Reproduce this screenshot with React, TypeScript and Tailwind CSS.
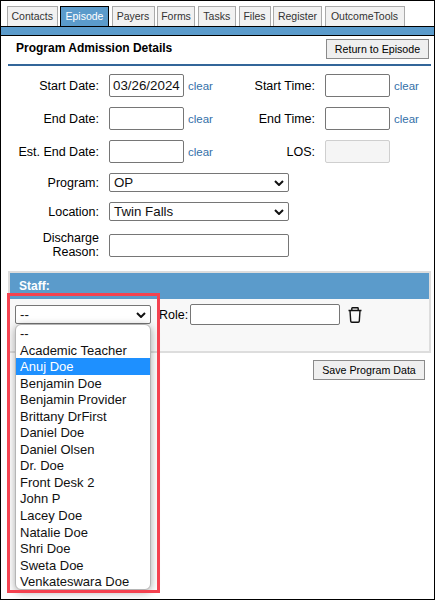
import React from "react";

const tabs = [
  ["Contacts", "w-[50.5px]"],
  ["Episode", "w-[49px]"],
  ["Payers", "w-[43px]"],
  ["Forms", "w-[38px]"],
  ["Tasks", "w-[38.5px]"],
  ["Files", "w-[32px]"],
  ["Register", "w-[49px]"],
  ["OutcomeTools", "w-[80px]"],
];

const staff = [
  "--",
  "Academic Teacher",
  "Anuj Doe",
  "Benjamin Doe",
  "Benjamin Provider",
  "Brittany DrFirst",
  "Daniel Doe",
  "Daniel Olsen",
  "Dr. Doe",
  "Front Desk 2",
  "John P",
  "Lacey Doe",
  "Natalie Doe",
  "Shri Doe",
  "Sweta Doe",
  "Venkateswara Doe",
];

function Label({ children, w = "w-[98px]" }: { children: React.ReactNode; w?: string }) {
  return <div className={`${w} shrink-0 text-right text-[12.5px] leading-[14px] text-black`}>{children}</div>;
}

function Field({ value = "", disabled = false, w = "w-[75px]" }: { value?: string; disabled?: boolean; w?: string }) {
  return (
    <div
      className={`${w} h-[23px] shrink-0 rounded-[2px] border px-[3px] text-[13.33px] leading-[21px] text-[#111] ${
        disabled ? "border-[#cfcfcf] bg-[#f5f5f5]" : "border-[#767676] bg-white"
      }`}
    >
      {value}
    </div>
  );
}

function Clear() {
  return <span className="ml-[4px] pt-px text-[11.5px] leading-[23px] text-[#336fa8]">clear</span>;
}

function Chevron() {
  return (
    <svg width="10" height="6" viewBox="0 0 10 6" className="absolute right-[4px] top-[6px]">
      <path d="M1 1l4 4 4-4" fill="none" stroke="#111" strokeWidth="2" />
    </svg>
  );
}

function Select({ value, className }: { value: string; className: string }) {
  return (
    <div
      className={`relative shrink-0 rounded-[2px] border border-[#767676] bg-white pl-[4px] text-[13.33px] leading-[17px] text-[#111] ${className}`}
    >
      {value}
      <Chevron />
    </div>
  );
}

function Btn({ children, className }: { children: React.ReactNode; className: string }) {
  return (
    <div
      className={`flex h-[20px] items-center justify-center border border-[#8a8a8a] bg-[#efefef] text-[10.67px] text-black ${className}`}
    >
      {children}
    </div>
  );
}

export default function App() {
  return (
    <div
      className="relative h-[600px] w-[435px] overflow-hidden border border-black bg-white"
      style={{ fontFamily: '"Liberation Sans", Arial, sans-serif' }}
    >
      <div className="flex h-[25px] gap-[2.5px] pl-[6px] pt-[5px]">
        {tabs.map(([t, w]) => (
          <div
            key={t}
            className={`${w} flex shrink-0 items-center justify-center text-[10.5px] ${
              t === "Episode"
                ? "border-x border-t border-black bg-[#5b9bcb] text-white"
                : "border-x border-t border-[#aaa] bg-[#f1f1f1] text-[#333]"
            }`}
          >
            {t}
          </div>
        ))}
      </div>
      <div className="h-[10px] border-y border-black bg-[#5b9bcb]" />

      <div className="flex h-[28px] items-start justify-between pl-[15px] pr-[5px] pt-[3px]">
        <div className="pt-[2px] text-[12px] font-bold leading-[14px] text-black">Program Admission Details</div>
        <Btn className="w-[103px]">Return to Episode</Btn>
      </div>
      <div className="ml-[7px] mr-[3px] h-[2px] bg-[#336699]" />

      <div className="flex flex-col pt-[8px]">
        <div className="flex h-[33px] items-start">
          <div className="flex w-[224px] items-start">
            <Label>
              <div className="pt-[5px]">Start Date:</div>
            </Label>
            <div className="ml-[10px]">
              <Field value="03/26/2024" />
            </div>
            <Clear />
          </div>
          <Label w="w-[90px]">
            <div className="pt-[5px]">Start Time:</div>
          </Label>
          <div className="ml-[10px] flex">
            <Field w="w-[65px]" />
            <Clear />
          </div>
        </div>
        <div className="flex h-[33px] items-start">
          <div className="flex w-[224px] items-start">
            <Label>
              <div className="pt-[5px]">End Date:</div>
            </Label>
            <div className="ml-[10px]">
              <Field />
            </div>
            <Clear />
          </div>
          <Label w="w-[90px]">
            <div className="pt-[5px]">End Time:</div>
          </Label>
          <div className="ml-[10px] flex">
            <Field w="w-[65px]" />
            <Clear />
          </div>
        </div>
        <div className="flex h-[33px] items-start">
          <div className="flex w-[224px] items-start">
            <Label>
              <div className="pt-[5px]">Est. End Date:</div>
            </Label>
            <div className="ml-[10px]">
              <Field />
            </div>
            <Clear />
          </div>
          <Label w="w-[90px]">
            <div className="pt-[5px]">LOS:</div>
          </Label>
          <div className="ml-[10px] flex">
            <Field w="w-[65px]" disabled />
          </div>
        </div>
        <div className="flex h-[29px] items-start">
          <Label>
            <div className="pt-[3px]">Program:</div>
          </Label>
          <Select value="OP" className="ml-[10px] h-[19px] w-[180px]" />
        </div>
        <div className="flex h-[32px] items-start">
          <Label>
            <div className="pt-[3px]">Location:</div>
          </Label>
          <Select value="Twin Falls" className="ml-[10px] h-[19px] w-[180px]" />
        </div>
        <div className="flex h-[37px] items-start">
          <Label>
            <div className="-mt-[3px]">
              Discharge
              <br />
              Reason:
            </div>
          </Label>
          <div className="ml-[10px]">
            <Field w="w-[180px]" />
          </div>
        </div>
      </div>

      <div className="ml-[7px] mr-[3px] h-[82px] border-2 border-[#dddddd] bg-[#f8f8f8]">
        <div className="h-[26px] bg-[#5b9bcb] pl-[9px] pt-[6px] text-[12px] font-bold leading-[14px] text-white">
          Staff:
        </div>
        <div className="flex items-start pl-[5px] pt-[6px]">
          <Select value="--" className="h-[19px] w-[136px]" />
          <span className="ml-[8px] pt-px text-[12.5px] leading-[19px] text-black">Role:</span>
          <div className="ml-[2px] -mt-px h-[21px] w-[150px] rounded-[2px] border border-[#767676] bg-white" />
          <svg width="14" height="16" viewBox="0 0 14 16" className="ml-[8px] mt-[2px]">
            <path
              d="M.5 3.5h13M3.8 3V1.4q0-.6.6-.6h5.2q.6 0 .6.6V3M2 3.5l.7 10.6q.1 1.1 1.1 1.1h6.4q1 0 1.1-1.1L12 3.5"
              fill="none"
              stroke="#111"
              strokeWidth="1.4"
            />
          </svg>
        </div>
      </div>

      <div className="flex justify-end pr-[9px] pt-[7px]">
        <Btn className="w-[112px]">Save Program Data</Btn>
      </div>

      <div className="absolute left-[14px] top-[323px] h-[266px] w-[136px] overflow-hidden rounded-[6px] border border-[#b5b5b5] bg-white text-[13px] leading-[17px] text-[#111] shadow-[0_2px_8px_rgba(0,0,0,0.35)]">
        {staff.map((s) => (
          <div key={s} className={`h-[16.55px] whitespace-nowrap pl-[4px] ${s === "Anuj Doe" ? "bg-[#1e90ff] text-white" : ""}`}>
            {s}
          </div>
        ))}
      </div>
      <div className="pointer-events-none absolute left-[6px] top-[292px] h-[300px] w-[153px] border-[3px] border-[#f44250]" />
    </div>
  );
}
